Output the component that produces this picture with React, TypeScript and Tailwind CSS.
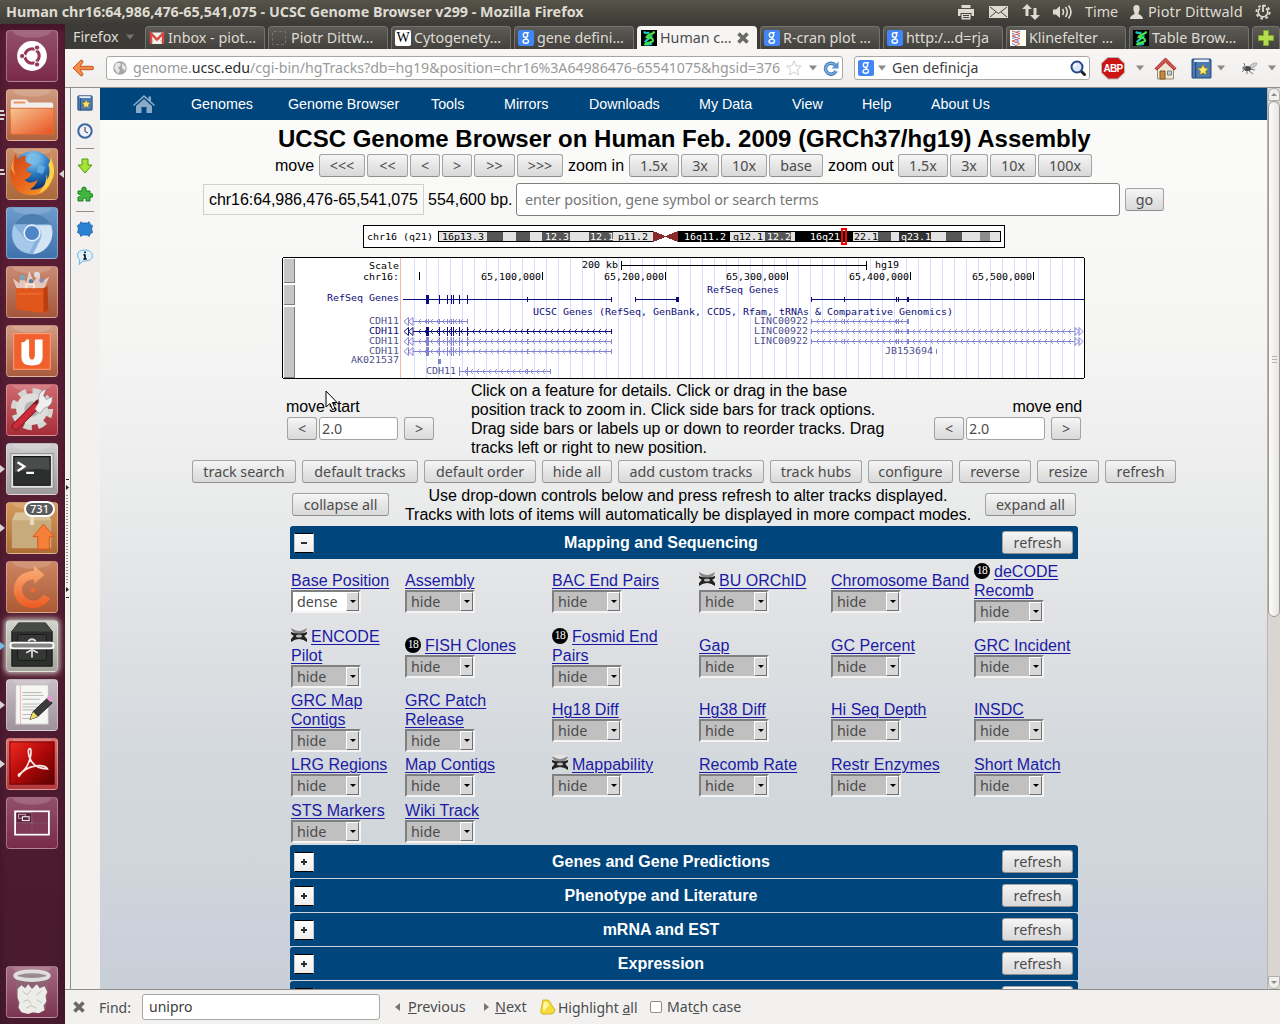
import React from "react";

type Kids = { children?: React.ReactNode };

const UI = "font-['Noto_Sans',sans-serif] text-[14.3px] text-[#4c4c4c]";

/* ---------- shared controls ---------- */

function Btn({ w, children, className = "" }: Kids & { w: string; className?: string }) {
  return (
    <button
      className={`${UI} ${w} ${className} h-[23px] shrink-0 rounded-[3px] border border-[#a3a3a3] border-b-[#8f8f8f] bg-linear-to-b from-[#f6f6f6] via-[#e6e6e6] to-[#d9d9d9] text-center leading-[21px] whitespace-nowrap`}
    >
      {children}
    </button>
  );
}

function Caret({ className = "" }: { className?: string }) {
  return (
    <svg className={`h-[6px] w-[8px] shrink-0 ${className}`} viewBox="0 0 8 6">
      <path d="M0 .5h8L4 5.500z" fill="#8a8a86" />
    </svg>
  );
}

/* ---------- small icons ---------- */

function GoogleIcon() {
  return (
    <span className="flex h-4 w-4 shrink-0 items-center justify-center rounded-[2px] bg-[#4285f4]">
      <svg className="h-4 w-4" viewBox="0 0 16 16" fill="none" stroke="#fff" strokeWidth="1.400">
        <ellipse cx="7.500" cy="5" rx="2.200" ry="2.400" />
        <path d="M8 2.600h3M8.500 7.300c-2 1.200 2 1.700 2 3.700 0 3-5.500 2.800-5.500.2 0-1.800 2-2 3.500-1.800" />
      </svg>
    </span>
  );
}

function DnaIcon() {
  return (
    <svg className="h-4 w-4 shrink-0" viewBox="0 0 16 16">
      <rect width="16" height="16" fill="#000" />
      <path d="M3 1.500C4 4 5.500 3 8.500 2.500M11 5.500C10.500 8 5.500 8.500 4 12.500M4 13.500q3 2 7 0" stroke="#17c6c0" strokeWidth="2.200" fill="none" />
      <path d="M13.500 1.500C12 5 5 4.500 5.500 8M6 8c3-1 6 0 6 2.500S6 11.500 3.500 15" stroke="#4be04a" strokeWidth="2.200" fill="none" />
    </svg>
  );
}

function GmailIcon() {
  return (
    <svg className="h-4 w-4 shrink-0" viewBox="0 0 16 16">
      <rect x="1" y="2.500" width="14" height="11.500" fill="#f1f1f1" />
      <path d="M1 14l5-5M15 14l-5-5" stroke="#c8c8c8" />
      <path d="M2 14V3.500l6 6 6-6V14" stroke="#d8483b" strokeWidth="2.400" fill="none" />
    </svg>
  );
}

function WikiIcon() {
  return (
    <span className="flex h-4 w-4 shrink-0 items-center justify-center rounded-[2px] bg-white font-['Liberation_Serif',serif] text-[14px] text-black">
      W
    </span>
  );
}

function HelixIcon() {
  return (
    <svg className="h-4 w-4 shrink-0" viewBox="0 0 16 16">
      <rect width="16" height="16" fill="#fffdf0" />
      <path d="M2 1l8 2.500L2 6l8 2.500L2 11l8 2.500L5 16" stroke="#d86060" fill="none" />
      <path d="M10 1L2 3.500 10 6 2 8.500 10 11l-8 2.500L7 16" stroke="#6c78d8" fill="none" strokeDasharray="4 3" />
    </svg>
  );
}

function BlankIcon() {
  return <span className="h-[14px] w-[14px] shrink-0 rounded-[2px] border border-dashed border-[#77756f]" />;
}

function CrossIcon({ className = "", color = "#6a6a66" }: { className?: string; color?: string }) {
  return (
    <svg className={`h-3 w-3 shrink-0 ${className}`} viewBox="0 0 12 12">
      <path d="M1.500 1.500l9 9M10.500 1.500l-9 9" stroke={color} strokeWidth="3.600" />
    </svg>
  );
}

function BookmarkBook({ size }: { size: string }) {
  return (
    <svg className={`${size} shrink-0`} viewBox="0 0 20 20">
      <rect x="1" y="1" width="18" height="18" rx="1" fill="#4a7ab4" stroke="#24456f" />
      <path d="M4.500 1v18" stroke="#24456f" />
      <path d="M3 1.500h14v2.300H3z" fill="#e9eef4" />
      <path d="M11.500 6l1.600 3.500 3.700.4-2.800 2.500.8 3.800-3.300-1.900-3.300 1.900.8-3.800L6.200 9.900l3.700-.4z" fill="#ffe96a" stroke="#8a7a14" strokeWidth=".7" />
    </svg>
  );
}

/* ---------- top panel ---------- */

function TopPanel() {
  return (
    <header className="flex h-6 shrink-0 items-center bg-linear-to-b from-[#575549] to-[#3c3b37] pr-2 pl-1.5 font-['Noto_Sans',sans-serif] text-[#dfdbd2]">
      <div className="w-[959px] text-[14.300px] leading-6 font-bold whitespace-nowrap">
        Human chr16:64,986,476-65,541,075 - UCSC Genome Browser v299 - Mozilla Firefox
      </div>
      <svg className="-ml-[7px] h-4 w-4" viewBox="0 0 16 16" fill="#dfdbd2">
        <path d="M3.500 1h9v3h-9zM0 5h16v7h-2.500V9h-11v3H0zM3.500 10h9v5.500h-9z" />
        <path d="M5 11.500h6M5 13.500h6" stroke="#444" />
      </svg>
      <svg className="ml-[15px] h-3 w-[19px]" viewBox="0 0 19 12">
        <rect width="19" height="12" fill="#dfdbd2" />
        <path d="M1 1l8.500 6.500L18 1M1 11l6-5M18 11l-6-5" stroke="#46443f" fill="none" />
      </svg>
      <svg className="ml-[14px] h-4 w-[18px]" viewBox="0 0 18 16" fill="#dfdbd2">
        <path d="M5 0l5 5H6.500v7h-3V5H0zM13 16l-5-5h3.500V4h3v7H18z" />
      </svg>
      <svg className="ml-[12px] h-4 w-[21px]" viewBox="0 0 21 16" fill="none" stroke="#dfdbd2" strokeWidth="1.600">
        <path d="M1 5.500h3l4-3.500v12l-4-3.500H1z" fill="#dfdbd2" stroke="none" />
        <path d="M10.500 5q2 3 0 6M13.500 3q3.500 5 0 10M16.500 1.500q5 6.500 0 13" />
      </svg>
      <span className="ml-[12px] w-[45px] text-[14.300px]">Time</span>
      <svg className="h-[14px] w-[13px]" viewBox="0 0 13 14" fill="#dfdbd2">
        <path d="M6.500 0C9 0 10 2 9.600 4.500 9.300 6.500 8.500 7 8.500 8.500c0 1.500 4.500 1.500 4.500 5.500H0c0-4 4.500-4 4.500-5.500C4.500 7 3.700 6.500 3.400 4.500 3 2 4 0 6.500 0z" />
      </svg>
      <span className="ml-[5px] w-[107px] pb-[2px] text-[14.500px] leading-[22px] tracking-[0.1px] whitespace-nowrap">Piotr Dittwald</span>
      <svg className="h-4 w-4 shrink-0" viewBox="0 0 16 16" fill="none" stroke="#dfdbd2">
        <circle cx="8" cy="8" r="6.600" strokeWidth="2" strokeDasharray="2.600 2.580" />
        <path d="M5 4.300a4.800 4.800 0 1 0 6 0" strokeWidth="1.600" />
        <path d="M8 1v7" strokeWidth="1.800" />
      </svg>
    </header>
  );
}

/* ---------- launcher ---------- */

function Tile({
  bg,
  children,
  left,
  right,
  className = "",
}: Kids & { bg: string; left?: "one" | "two" | "many" | "blue"; right?: boolean; className?: string }) {
  return (
    <div className={`relative h-[52px] w-[52px] shrink-0 rounded-[4px] border border-white/30 bg-linear-to-b ${bg} ${className}`}>
      <svg className="h-[50px] w-[50px]" viewBox="0 0 52 52">
        <ellipse cx="26" cy="0" rx="20" ry="7" fill="#fff" opacity=".15" />
        {children}
      </svg>
      {left === "one" && <i className="absolute top-[21px] -left-[7px] border-y-[4px] border-l-[5px] border-y-transparent border-l-[#d8d4d6]" />}
      {left === "blue" && <i className="absolute top-[21px] -left-[7px] border-y-[4px] border-l-[5px] border-y-transparent border-l-[#6fc3e8]" />}
      {(left === "many" || left === "two") && (
        <i className="absolute top-[20px] -left-[7px] flex flex-col gap-[2px]">
          <b className="h-[2px] w-[4px] bg-[#d8d4d6]" />
          <b className="h-[2px] w-[5px] bg-[#d8d4d6]" />
          {left === "many" && <b className="h-[2px] w-[4px] bg-[#d8d4d6]" />}
        </i>
      )}
      {right && <i className="absolute top-[21px] -right-[7px] border-y-[4px] border-r-[5px] border-y-transparent border-r-[#d8d4d6]" />}
    </div>
  );
}

function Launcher() {
  return (
    <aside className="flex w-[65px] shrink-0 flex-col gap-[7px] bg-linear-to-b from-[#5a1d34] via-[#561d33] to-[#471a2b] py-1.5 pl-1.5 shadow-[inset_0_6px_6px_rgba(0,0,0,0.25)]">
      <Tile bg="from-[#93506a] to-[#7b2a49]">
        <circle cx="26" cy="26" r="15.500" fill="#fff" />
        <circle cx="26" cy="26" r="7.500" fill="none" stroke="#93395a" strokeWidth="3.200" />
        <path d="M26 26L15 26M26 26l5.500-9.500M26 26l5.500 9.500" stroke="#fff" strokeWidth="1.400" />
        <g fill="#93395a" stroke="#fff" strokeWidth="1">
          <circle cx="15.800" cy="26" r="2.700" />
          <circle cx="31.200" cy="17.200" r="2.700" />
          <circle cx="31.200" cy="34.800" r="2.700" />
        </g>
      </Tile>
      <Tile bg="from-[#d09a80] to-[#b0613d]" left="many">
        <path d="M4 12q0-2 2-2h14l3 3h23q2 0 2 2v8H4z" fill="#f1eeec" />
        <path d="M7 12h12v2H7z" fill="#f09060" />
        <defs>
          <linearGradient id="fold" x2="1" y2="1">
            <stop stopColor="#f5c795" />
            <stop offset="1" stopColor="#e9501e" />
          </linearGradient>
        </defs>
        <path d="M3 19h46l-1 27H4z" fill="url(#fold)" stroke="#e06a30" />
      </Tile>
      <Tile bg="from-[#cd9067] to-[#a9683c]" left="two" right>
        <defs>
          <radialGradient id="globe" cx=".5" cy=".2" r=".8">
            <stop stopColor="#9fd8f8" />
            <stop offset=".5" stopColor="#2a7cc4" />
            <stop offset="1" stopColor="#0a2e6e" />
          </radialGradient>
          <linearGradient id="fox" x2="1" y2="1">
            <stop stopColor="#c9451a" />
            <stop offset=".5" stopColor="#ea661c" />
            <stop offset="1" stopColor="#f7a52c" />
          </linearGradient>
        </defs>
        <circle cx="27" cy="22" r="20" fill="url(#globe)" />
        <path d="M24 8q6-3 10 2l-4 5-6-2zM33 16l7 3-3 7-6-2z" fill="#6ab5e6" opacity=".8" />
        <path d="M47 15q4 9 0 18-6 15-21 15Q9 48 4 33 1 20 9 5l2 6q4-4 9-4-2 4 0 7 4 1 6 3-6 2-6 5 1 3 6 3-3 6-8 7 6 6 14 0-3 8-9 10 13 3 19-9 5-9 5-18z" fill="url(#fox)" />
        <path d="M46 6q0 5 2 10 3 10-3 19-4 8-12 11 9-10 8-20 1 3 1 6 4-8 1-16 3-4 3-10z" fill="#fbd24a" />
        <path d="M8 8q-3 10 1 20-5-7-5-8Q5 13 8 8z" fill="#f79a3c" />
      </Tile>
      <Tile bg="from-[#6d9ccb] to-[#3f72ad]">
        <circle cx="26" cy="27" r="21" fill="#86b3de" />
        <path d="M8 17Q14 6 26 6q13 0 19 11H26z" fill="#4a7fb0" />
        <path d="M46 18q4 12-4 22-6 7-15 8l8-16q3-7-4-14z" fill="#d3e4f5" />
        <path d="M7 18l10 12q5 8 12 5l-6 12Q9 45 6 32q-1-8 1-14z" fill="#a6c8ea" />
        <circle cx="26" cy="26" r="9" fill="#e8f1fa" />
        <circle cx="26" cy="26" r="7.300" fill="#4f86c6" />
      </Tile>
      <Tile bg="from-[#c98a72] to-[#a5563a]">
        <path d="M10 22L6 12l7 5 1-9 6 8 3-12 5 11 6-9 1 10 9-6-5 12z" fill="#f7e9e2" opacity=".7" />
        <circle cx="16" cy="11" r="3" fill="#7aa5b8" />
        <circle cx="31" cy="8" r="3" fill="#ddd" />
        <circle cx="36" cy="14" r="2.500" fill="#8d8db4" />
        <circle cx="25" cy="15" r="2.500" fill="#657b9a" />
        <path d="M9 22h29l4-2 1 25-4 3-29-4z" fill="#e0561b" />
        <path d="M38 22v26l5-3-1-25z" fill="#b93f0e" />
        <path d="M20 22v-4h8v4" fill="none" stroke="#ffe4d2" strokeWidth="2" />
        <path d="M11 28h26" stroke="#ef7a42" />
      </Tile>
      <Tile bg="from-[#d49a80] to-[#a95c3d]">
        <rect x="7" y="8" width="38" height="37" fill="#f2612d" stroke="#ffa27a" />
        <path d="M15 17q4 0 5-3h3v16q0 5 3 5t3-5V14h8v19q0 8-11 8T15 33z" fill="#fff" />
      </Tile>
      <Tile bg="from-[#cf6a70] to-[#a52c38]">
        <circle cx="26" cy="25" r="18" fill="none" stroke="#d4d4d2" strokeWidth="8" strokeDasharray="8 6.140" />
        <circle cx="26" cy="25" r="16.500" fill="#dededc" />
        <circle cx="26" cy="25" r="8" fill="#b4b4b2" />
        <path d="M9 43l24-24" stroke="#7c1a22" strokeWidth="8" strokeLinecap="round" />
        <path d="M9 43l20-20" stroke="#cf2a38" strokeWidth="6" strokeLinecap="round" />
        <path d="M29 25l4-7q-2-11 8-14l-3 7 3 4 6-3q1 10-8 12l-5 6z" fill="#eee" stroke="#888" strokeWidth=".7" />
      </Tile>
      <Tile bg="from-[#cfcdce] to-[#9e9a9c]" left="one">
        <rect x="4" y="10" width="44" height="36" fill="#e4e4e4" stroke="#8c8c8c" />
        <rect x="7" y="13" width="38" height="30" fill="#2d2f2e" stroke="#111" />
        <path d="M8 14h36v13Q26 24 8 30z" fill="#4a4c4b" />
        <path d="M11 19l7 4.500-7 4.500M20 30h8" stroke="#fff" strokeWidth="2.400" fill="none" />
      </Tile>
      <div className="relative">
        <Tile bg="from-[#d69a5e] to-[#ac6c33]" left="one">
          <path d="M5 18l4-8h33l4 8v29H5z" fill="#c8ab7c" />
          <path d="M5 18l4-8h33l4 8z" fill="#d9c198" />
          <path d="M24 10h4v13h-4z" fill="#e8dabe" />
          <path d="M38 22l11 13h-5v13H32V35h-5z" fill="#f58138" stroke="#d9521b" />
        </Tile>
        <span className="absolute -top-[1px] left-[18px] flex h-4 w-[31px] items-center justify-center rounded-full border-2 border-white bg-[#5b5b5b] font-['Noto_Sans',sans-serif] text-[11px] font-medium text-white">
          731
        </span>
      </div>
      <Tile bg="from-[#cc8562] to-[#ac5a33]">
        <defs>
          <linearGradient id="swirl" x2="0" y2="1">
            <stop stopColor="#f9b27a" />
            <stop offset="1" stopColor="#ee5a22" />
          </linearGradient>
        </defs>
        <path d="M45 38Q38 48 27 48 8 46 7 29 8 11 28 9V4l11 9.500L28 23v-5Q16 19 15.500 29 17 39 27 40q7 0 11-6z" fill="url(#swirl)" />
        <circle cx="27" cy="29" r="2.500" fill="#ef6a30" />
      </Tile>
      <Tile bg="from-[#d3d3cd] to-[#a5a59d]" left="blue" className="shadow-[0_0_5px_2px_rgba(230,230,220,0.7)]">
        <path d="M5 11l7-9h28l7 9v36H5z" fill="#2e302e" stroke="#151515" />
        <path d="M5 11l7-9h28l7 9z" fill="#484a47" />
        <rect x="11" y="14" width="30" height="27" rx="2" fill="#363836" stroke="#191919" />
        <path d="M22 21q4-4 8 0M26 30v8M26 30l-6 3M26 30l6 3" stroke="#ddd" strokeWidth="1.800" fill="none" />
        <rect x="3.500" y="22.500" width="45" height="6" rx="3" fill="#858585" stroke="#fff" strokeWidth="2" />
      </Tile>
      <Tile bg="from-[#c9bfc6] to-[#a0929b]" left="one">
        <rect x="9" y="5" width="34" height="41" fill="#f6f6f4" stroke="#bbb" />
        <path d="M14 5v41" stroke="#f0b0b0" />
        <path d="M16 13h20M16 16h22M16 20h18M16 25h20M16 28h18M16 31h12M16 36h10M16 40h8" stroke="#b4b4b4" />
        <path d="M24 41l3-8 15-14 5 5-15 14z" fill="#3b3b3b" stroke="#222" />
        <path d="M24 41l3-8 5 5z" fill="#f0dc6a" />
        <path d="M41 19l3-3q3 0 4 4l-3 3z" fill="#e79ad0" />
      </Tile>
      <Tile bg="from-[#dc6c68] to-[#b23a3e]" left="one">
        <defs>
          <linearGradient id="pdf" x2="1" y2="1">
            <stop stopColor="#f02a22" />
            <stop offset=".5" stopColor="#b00808" />
            <stop offset="1" stopColor="#5a0202" />
          </linearGradient>
        </defs>
        <rect x="3" y="3" width="46" height="44" fill="url(#pdf)" stroke="#6a0000" />
        <path d="M12 37q9-5 12-17 2-9 0-10-3 0-1 8 4 13 19 13-2-4-12-3Q18 30 13 38q-1 2-1-1z" fill="none" stroke="#fbe9e6" strokeWidth="1.800" />
      </Tile>
      <Tile bg="from-[#92506a] to-[#792b48]">
        <rect x="8.500" y="14" width="35" height="24" fill="#5e2440" stroke="#fff" strokeWidth="2" />
        <path d="M26 15v22M9.500 26h33" stroke="#a37a8c" strokeWidth="1" />
        <path d="M26.500 15h16v10.500h-16zM9.500 26.500h16V37h-16zM26.500 26.500h16V37h-16z" fill="#803a57" />
        <rect x="12" y="17" width="7" height="4" fill="none" stroke="#bda4ae" />
        <rect x="16" y="19.500" width="7" height="4" fill="#5e2440" stroke="#fff" />
      </Tile>
      <div className="grow" />
      <Tile bg="from-[#a26a80] to-[#7b3450]">
        <path d="M8 9l4 36q14 5 28 0l4-36z" fill="#8d6574" opacity=".8" />
        <ellipse cx="26" cy="9" rx="17.500" ry="4.500" fill="#9a8a90" stroke="#dededc" strokeWidth="4" />
        <path d="M11 23l4-4 4 3 3-4 4 5 5-5 3 4 5-2 3 6-2 4 1 6-3 4 1 5-6 3-6-1-5 2-7-2-3-5 1-5-2-5z" fill="#ecece9" />
        <path d="M16 25l5 4 4-5M31 29l5-4M17 36l5-2 3 4M31 34l5 3M20 43l5-3 6 3" stroke="#bcbcb8" fill="none" />
      </Tile>
    </aside>
  );
}

/* ---------- browser chrome ---------- */

const tabs: { icon: React.ReactNode; label: string; active?: boolean }[] = [
  { icon: <GmailIcon />, label: "Inbox - piot…" },
  { icon: <BlankIcon />, label: "Piotr Dittw…" },
  { icon: <WikiIcon />, label: "Cytogenety…" },
  { icon: <GoogleIcon />, label: "gene defini…" },
  { icon: <DnaIcon />, label: "Human c…", active: true },
  { icon: <GoogleIcon />, label: "R-cran plot …" },
  { icon: <GoogleIcon />, label: "http:/…d=rja" },
  { icon: <HelixIcon />, label: "Klinefelter …" },
  { icon: <DnaIcon />, label: "Table Brow…" },
];

function TabBar() {
  return (
    <div className="flex h-[25px] shrink-0 items-end gap-[3px] bg-[#3c3b37] font-['Noto_Sans',sans-serif] text-[14.300px]">
      <div className="flex h-full w-[77px] shrink-0 items-center pl-2 text-[#dfdbd2]">
        <span className="w-[53px] text-[14.300px]">Firefox</span>
        <svg className="h-[6px] w-[8px]" viewBox="0 0 8 6">
          <path d="M0 .5h8L4 5.500z" fill="#77756f" />
        </svg>
      </div>
      {tabs.map((t) => (
        <div
          key={t.label}
          className={
            t.active
              ? "flex h-[23px] w-[120px] shrink-0 items-center rounded-t-[4px] bg-[#f6f5f4] pl-[4px] leading-[20px] whitespace-nowrap text-[#4c4c4c]"
              : "flex h-[23px] w-[120px] shrink-0 items-center rounded-t-[4px] border border-b-0 border-[#74726c] bg-linear-to-b from-[#5d5b56] to-[#42413d] pl-[3px] leading-[20px] whitespace-nowrap text-[#dfdbd2]"
          }
        >
          <span className="flex w-[19px] shrink-0">{t.icon}</span>
          <span className={t.active ? "w-[77px] shrink-0" : ""}>{t.label}</span>
          {t.active && <CrossIcon />}
        </div>
      ))}
      <div className="flex h-[23px] w-[28px] shrink-0 items-center justify-center rounded-t-[4px] border border-b-0 border-[#74726c] bg-linear-to-b from-[#5d5b56] to-[#42413d]">
        <svg className="h-4 w-4" viewBox="0 0 16 16">
          <path d="M5.500.5h5v5h5v5h-5v5h-5v-5h-5v-5h5z" fill="#b5dc4e" stroke="#7fa423" />
        </svg>
      </div>
    </div>
  );
}

function NavToolbar() {
  return (
    <div className={`${UI} flex h-[39px] shrink-0 items-center border-b border-[#8f8e8b] bg-linear-to-b from-[#f7f6f5] to-[#efeeed] pl-[7px]`}>
      <svg className="h-[18px] w-[22px] shrink-0" viewBox="0 0 22 18">
        <path d="M1 9l8-8q2 0 2 2L8 7.300h12q1.500 0 1.500 1.700t-1.500 1.700H8l3 4.300q0 2-2 2z" fill="#f58a4b" stroke="#c65a1e" strokeLinejoin="round" />
      </svg>
      <div className="ml-[12px] flex h-6 w-[737px] shrink-0 items-center rounded-[3px] border border-[#a9a7a3] bg-white pl-[6px]">
        <svg className="h-[14px] w-[14px] shrink-0" viewBox="0 0 14 14">
          <circle cx="7" cy="7" r="6.800" fill="#a5a5a5" />
          <path d="M3 2l4 0 1 2-3 3 2 2-2 4-2-3-2-3zM9 2l4 4-1 4-3-3 0-2z" fill="#e6e6e6" />
        </svg>
        <div className="ml-[6px] w-[653px] shrink-0 text-[14.200px] tracking-[-0.045px] whitespace-nowrap text-[#9a9a9a]">
          genome.<span className="text-[#2c2c2c]">ucsc.edu</span>/cgi-bin/hgTracks?db=hg19&amp;position=chr16%3A64986476-65541075&amp;hgsid=376
        </div>
        <svg className="h-4 w-4 shrink-0" viewBox="0 0 16 16">
          <path d="M8 .8l2.100 5 5.200.3-4 3.500 1.400 5.300L8 12l-4.700 2.900 1.400-5.300-4-3.500 5.200-.3z" fill="#fff" stroke="#cfcfcf" />
        </svg>
        <Caret className="ml-[7px]" />
        <svg className="ml-[6px] h-[15px] w-4 shrink-0" viewBox="0 0 16 15">
          <path d="M12.500 4.500A5.500 5.500 0 1 0 13 10" fill="none" stroke="#3c78b8" strokeWidth="3.400" />
          <path d="M12.500 4.500A5.500 5.500 0 1 0 13 10" fill="none" stroke="#7fb2e2" strokeWidth="1.600" />
          <path d="M15.500.5v7h-7z" fill="#5a95cf" />
        </svg>
      </div>
      <div className="ml-[11px] flex h-6 w-[236px] shrink-0 items-center rounded-[3px] border border-[#a9a7a3] bg-white pl-[3px]">
        <GoogleIcon />
        <Caret className="ml-[4px]" />
        <span className="ml-[6px] w-[178px] text-[14.100px] text-[#3c3c3c]">Gen definicja</span>
        <svg className="h-4 w-4 shrink-0" viewBox="0 0 16 16">
          <path d="M10.500 10.500l4 4" stroke="#222" strokeWidth="3" strokeLinecap="round" />
          <circle cx="7" cy="7" r="5.500" fill="#dbe8f8" stroke="#27458a" strokeWidth="2" />
          <path d="M4 7a3 3 0 0 1 3-3" stroke="#fff" strokeWidth="1.500" fill="none" />
        </svg>
      </div>
      <span className="ml-[11px] flex h-[23px] w-[24px] shrink-0 items-center justify-center bg-[#b9b9b9] [clip-path:polygon(29%_0,71%_0,100%_29%,100%_71%,71%_100%,29%_100%,0_71%,0_29%)]">
        <span className="flex h-[21px] w-[22px] items-center justify-center bg-[#cc1414] font-['Liberation_Sans_Narrow','Liberation_Sans',sans-serif] text-[10px] font-bold tracking-[-0.7px] text-white [clip-path:polygon(29%_0,71%_0,100%_29%,100%_71%,71%_100%,29%_100%,0_71%,0_29%)]">
          ABP
        </span>
      </span>
      <Caret className="ml-[11px]" />
      <svg className="ml-[10px] h-[23px] w-[23px] shrink-0" viewBox="0 0 23 23">
        <path d="M3.500 11v11h16V11l-8-7z" fill="#efe6d6" stroke="#9c8a74" />
        <path d="M11.500 1L1 11.500l2 1.500 8.500-8 8.500 8 2-1.500z" fill="#d9534a" stroke="#98302a" />
        <path d="M6 14h5v8H6z" fill="#c68a3a" stroke="#7a5420" />
        <path d="M13.500 14h4v4h-4z" fill="#b9d0e6" stroke="#7c7c7c" />
      </svg>
      <span className="ml-[14px] flex">
        <BookmarkBook size="h-[21px] w-[21px]" />
      </span>
      <Caret className="ml-[5px]" />
      <svg className="ml-[16px] h-4 w-[17px] shrink-0" viewBox="0 0 17 16">
        <path d="M7 8Q11 2 16 3q0 4-7 6z" fill="#c9c9c9" stroke="#999" strokeWidth=".6" />
        <ellipse cx="6.500" cy="8.500" rx="3.600" ry="2.600" fill="#4b4b4b" />
        <circle cx="3" cy="8" r="1.700" fill="#777" />
        <path d="M3 10l-2 2M6 11l0 3M8 11l4 3M9 9l5 1M4 6l-1-3" stroke="#555" strokeWidth=".8" />
      </svg>
      <Caret className="ml-[10px]" />
    </div>
  );
}

function SideIcons() {
  return (
    <>
      <div className="flex w-[6px] shrink-0 flex-col items-center border-r border-[#8f8e8b] bg-[#f2f1f0] pt-[391px]">
        <svg className="h-[122px] w-[5px]" viewBox="0 0 5 122">
          <path d="M1 .5h3M1 118.500h3" stroke="#222" />
          <path d="M1 6l3 2.500L1 11zM1 108l3 2.500-3 2.500z" fill="#222" />
          <path d="M2 16v88" stroke="#333" strokeDasharray="1 2" />
        </svg>
      </div>
      <div className="flex w-[29px] shrink-0 flex-col items-center bg-[#f2f1f0] pt-[7px] pr-px">
        <BookmarkBook size="h-4 w-4" />
        <svg className="mt-[12px] h-4 w-4" viewBox="0 0 16 16">
          <circle cx="8" cy="8" r="6.700" fill="#eef2f8" stroke="#3d659e" strokeWidth="2" />
          <path d="M8 4v4.500l3 1.500" stroke="#333" fill="none" />
        </svg>
        <div className="mt-[9px] h-px w-[18px] bg-[#8f8e8b]" />
        <svg className="mt-[9px] h-4 w-4" viewBox="0 0 16 16">
          <path d="M5 1h6v6h4l-7 8-7-8h4z" fill="#a5e335" stroke="#4c9a0a" />
        </svg>
        <svg className="mt-[12px] h-4 w-4" viewBox="0 0 16 16">
          <path d="M1 5h4q-1-4 2-4t2 4h4v3q3-1 3 1.500T13 11v4H9q1-3-1.500-3T6 15H1v-4q3 0 3-1.500T1 8z" fill="#3fb93c" stroke="#1d7f1f" />
        </svg>
        <div className="mt-[9px] h-px w-[18px] bg-[#8f8e8b]" />
        <svg className="mt-[9px] h-4 w-4" viewBox="0 0 16 16">
          <path d="M4 .7l1.500 1.300h5L12 .7l1.500 3 2 1L14.500 8l1 3.500-2 1-1.500 3L10.500 14h-5L4 15.500l-1.500-3-2-1L1.500 8l-1-3.500 2-1z" fill="#2c82d2" stroke="#1a5ea5" strokeWidth=".8" />
        </svg>
        <svg className="mt-[12px] h-4 w-4" viewBox="0 0 16 16">
          <path d="M8 1c4.500 0 7.500 2.400 7.500 5.700S12.500 12 8 12q-1 0-2 0l-4 3.500.8-5Q.5 9 .5 6.700.5 1 8 1z" fill="#dff0fc" stroke="#6bb2e3" />
          <path d="M8 2.500v1.800M8 5.500v4.500M6.500 5.800h1.500M6.300 10h3.500" stroke="#111" strokeWidth="1.700" />
        </svg>
      </div>
    </>
  );
}

function ScrollBar() {
  return (
    <div className="flex w-[13px] shrink-0 flex-col border-l border-[#b9b4ae] bg-[#d9d5d1]">
      <div className="flex h-[13px] items-center justify-center rounded-t-full border border-[#b4b0ab] bg-[#f0efee]">
        <i className="border-x-[3px] border-b-[3px] border-x-transparent border-b-[#8a8a86]" />
      </div>
      <div className="flex h-[516px] flex-col items-center justify-center gap-[2px] rounded-[6px] border border-[#9c9893] bg-linear-to-r from-[#fbfbfa] to-[#e8e6e4]">
        <i className="h-px w-[5px] bg-[#b4b0ab]" />
        <i className="h-px w-[5px] bg-[#b4b0ab]" />
        <i className="h-px w-[5px] bg-[#b4b0ab]" />
      </div>
      <div className="grow" />
      <div className="flex h-[13px] items-center justify-center rounded-b-full border border-[#b4b0ab] bg-[#f0efee]">
        <i className="border-x-[3px] border-t-[3px] border-x-transparent border-t-[#8a8a86]" />
      </div>
    </div>
  );
}

function FindBar() {
  return (
    <div className={`${UI} flex h-[35px] shrink-0 items-center border-t border-[#8f8e8b] bg-[#f2f1f0] pl-[8px] whitespace-nowrap`}>
      <CrossIcon />
      <span className="ml-[14px] w-[43px] shrink-0 text-[14px]">Find:</span>
      <div className="h-[26px] w-[238px] shrink-0 rounded-[3px] border border-[#a9a7a3] bg-white pl-[6px] text-[14px] leading-[24px] text-[#3c3c3c]">unipro</div>
      <i className="ml-[15px] border-y-[4px] border-r-[5px] border-y-transparent border-r-[#77756f]" />
      <span className="ml-[8px] w-[76px] shrink-0 text-[14.400px]"><u>P</u>revious</span>
      <i className="border-y-[4px] border-l-[5px] border-y-transparent border-l-[#77756f]" />
      <span className="ml-[6px] w-[45px] shrink-0 text-[14.400px]"><u>N</u>ext</span>
      <svg className="h-4 w-4 shrink-0" viewBox="0 0 16 16">
        <path d="M3 1h5q2 1 3 4l4 6q-1 4-4 4H2q-2-1-1-4z" fill="#f7dc3d" stroke="#d3b31b" />
        <path d="M4 3q3-1 5 3l-5 6q-2-3 0-9z" fill="#fff6a8" />
      </svg>
      <span className="ml-[2px] w-[92px] shrink-0 text-[14px]">Highlight <u>a</u>ll</span>
      <span className="h-3 w-3 shrink-0 rounded-[2px] border border-[#8f8e8b] bg-white" />
      <span className="ml-[5px] text-[14.100px]">Mat<u>c</u>h case</span>
    </div>
  );
}

/* ---------- genome page ---------- */

const menu: [string, string][] = [
  ["Genomes", "w-[97px]"],
  ["Genome Browser", "w-[143px]"],
  ["Tools", "w-[73px]"],
  ["Mirrors", "w-[85px]"],
  ["Downloads", "w-[110px]"],
  ["My Data", "w-[93px]"],
  ["View", "w-[70px]"],
  ["Help", "w-[69px]"],
  ["About Us", "w-[80px]"],
];

const mono = "'DejaVu Sans Mono', monospace";

function Label({ x, y, t, c = "#000", end }: { x: number; y: number; t: string; c?: string; end?: boolean }) {
  const len = t.length * 6;
  return (
    <text x={end ? x - len : x} y={y} fontFamily={mono} fontSize="9" textLength={len} lengthAdjust="spacingAndGlyphs" fill={c} xmlSpace="preserve">
      {t}
    </text>
  );
}

const bands: [number, number, string][] = [
  [438, 487, "#e2e2e2"], [487, 503, "#555"], [503, 516, "#e2e2e2"], [516, 530, "#555"], [530, 542, "#e2e2e2"],
  [542, 570, "#555"], [570, 589, "#e2e2e2"], [589, 613, "#555"], [613, 653, "#e2e2e2"],
  [678, 730, "#000"], [730, 765, "#e2e2e2"], [765, 791, "#555"], [791, 795, "#e2e2e2"], [795, 853, "#000"],
  [853, 878, "#e2e2e2"], [878, 891, "#555"], [891, 899, "#e2e2e2"], [899, 931, "#333"], [931, 946, "#e2e2e2"],
  [946, 962, "#555"], [962, 980, "#e2e2e2"], [980, 990, "#8e8e8e"], [990, 1000, "#e2e2e2"],
];

function Ideogram() {
  return (
    <svg className="ml-[263px] h-[23px] w-[642px]" viewBox="363 225 642 23" shapeRendering="crispEdges">
      <rect x="363.500" y="225.500" width="641" height="22" rx="1" fill="#fff" stroke="#000" />
      {bands.map(([a, b, f]) => (
        <rect key={a} x={a} y="232" width={b - a} height="9" fill={f} />
      ))}
      <path d="M653 231.500H438.500v10H653M678 231.500h322.500v10H678" fill="none" stroke="#000" />
      <path d="M653 231l12.500 5L678 231v11l-12.500-5-12.500 5z" fill="#8b2a2a" />
      <Label x={367} y={240} t="chr16 (q21)" />
      <Label x={442} y={240} t="16p13.3" />
      <Label x={545} y={240} t="12.3" c="#fff" />
      <Label x={590} y={240} t="12.1" c="#fff" />
      <Label x={618} y={240} t="p11.2" />
      <Label x={684} y={240} t="16q11.2" c="#fff" />
      <Label x={733} y={240} t="q12.1" />
      <Label x={767} y={240} t="12.2" c="#fff" />
      <Label x={810} y={240} t="16q21" c="#fff" />
      <Label x={854} y={240} t="22.1" />
      <Label x={901} y={240} t="q23.1" c="#fff" />
      <rect x="842" y="229" width="4" height="15" fill="none" stroke="#f00" strokeWidth="2" />
    </svg>
  );
}

const DARK = "#0c0c78";
const LIGHT = "#8282d2";

function Gene({ y, a, b, c, exons = [], small = [], arrows = true }: { y: number; a: number; b: number; c: string; exons?: number[]; small?: number[]; arrows?: boolean }) {
  const marks: number[] = [];
  if (arrows) for (let x = a + 5; x < b - 3; x += 6) marks.push(x);
  return (
    <g fill="none" stroke={c}>
      <path d={`M${a} ${y}H${b}`} />
      <path d={marks.map((x) => `M${x + 1} ${y - 1}h1M${x + 1} ${y + 1}h1M${x + 2} ${y - 2}h1M${x + 2} ${y + 2}h1`).join("")} opacity=".8" />
      <path d={exons.map((x) => `M${x + 0.5} ${y - 4.5}v9`).join("")} />
      <path d={small.map((x) => `M${x + 0.5} ${y - 2.5}v5`).join("")} />
    </g>
  );
}

const cdhExons = [439, 447, 451, 453, 459, 467];

function TrackImage() {
  const grid = Array.from({ length: 56 }, (_, i) => 414 + i * 12);
  return (
    <svg className="mt-[9px] ml-[182px] h-[122px] w-[803px]" viewBox="282 257 803 122" shapeRendering="crispEdges">
      <rect x="282.500" y="257.500" width="802" height="121" rx="2" fill="#fff" stroke="#000" />
      {[[259, 24], [285, 20], [307, 71]].map(([y, h]) => (
        <g key={y}>
          <rect x="284" y={y} width="11" height={h} fill="#c6c6c6" />
          <path d={`M294.500 ${y}v${h}M284 ${y + h - 0.5}h11`} stroke="#7c7c7c" />
        </g>
      ))}
      <path d={grid.map((x) => `M${x + 0.5} 258v120`).join("")} stroke="#dcdcff" />
      <path d="M400.500 258v120" stroke="#f5b4b4" />

      <Label x={399} y={269} t="Scale" end />
      <Label x={399} y={280} t="chr16:" end />
      <Label x={618} y={268} t="200 kb" end />
      <Label x={875} y={268} t="hg19" />
      <path d="M621.500 265.500H866.500M621.500 261v9M866.500 261v9M419.500 272v8" stroke="#000" fill="none" />
      {[542, 665, 787, 910, 1033].map((x, i) => (
        <g key={x}>
          <Label x={x - 1} y={280} t={`65,${i + 1}00,000`} end />
          <path d={`M${x + 0.5} 272v8`} stroke="#000" />
        </g>
      ))}

      <Label x={707} y={293} t="RefSeq Genes" c={DARK} />
      <Label x={399} y={301} t="RefSeq Genes" c={DARK} end />
      <Gene y={299.5} a={403} b={612} c={DARK} exons={cdhExons} small={[527, 611]} arrows={false} />
      <rect x="426" y="295" width="3" height="9" fill={DARK} />
      <Gene y={299.5} a={635} b={679} c={DARK} small={[635, 676, 677, 678]} arrows={false} />
      <Gene y={299.5} a={811} b={1084} c={DARK} small={[811, 844, 896, 898, 907, 908]} arrows={false} />

      <Label x={533} y={315} t="UCSC Genes (RefSeq, GenBank, CCDS, Rfam, tRNAs & Comparative Genomics)" c={DARK} />

      {[321.5, 331.5, 341.5, 351.5].map((y, i) => {
        const c = i === 1 ? DARK : LIGHT;
        return (
          <g key={y}>
            <Label x={399} y={y + 2.5} t="CDH11" c={i === 1 ? DARK : "#50508c"} end />
            <Gene
              y={y}
              a={413}
              b={i === 0 ? 468 : 612}
              c={c}
              exons={i === 0 ? [] : i === 3 ? cdhExons.slice(0, 5) : cdhExons}
              small={i === 0 ? [426, 428, 439, 447, 451, 453, 459, 467] : [527, 611]}
            />
            {i > 0 && <rect x="426" y={y - 4.500} width="3" height="9" fill={c} />}
            <path d={`M408.500 ${y - 4}l-4.500 4 4.500 4zM413 ${y - 4}l-4.500 4 4.500 4z`} fill="none" stroke={c} shapeRendering="auto" />
          </g>
        );
      })}
      <Label x={399} y={363} t="AK021537" c="#50508c" end />
      <rect x="438" y="359" width="3" height="5" fill={LIGHT} />
      <Label x={426} y={374} t="CDH11" c="#50508c" />
      <Gene y={371.5} a={459} b={551} c={LIGHT} exons={[459, 467]} small={[527, 550]} />

      {[321.5, 331.5, 341.5].map((y, i) => (
        <g key={y}>
          <Label x={754} y={y + 2.5} t="LINC00922" c="#50508c" />
          <Gene y={y} a={811} b={i === 0 ? 909 : 1074} c={LIGHT} small={[811, ...(i === 1 ? [] : [844]), 896, 898, 907, 908]} />
          {i > 0 && <path d={`M1075 ${y - 4}l4 4-4 4zM1079 ${y - 4}l4 4-4 4z`} fill="none" stroke={LIGHT} shapeRendering="auto" />}
        </g>
      ))}
      <Label x={885} y={354} t="JB153694" c="#50508c" />
      <path d="M936.500 349v5" stroke={LIGHT} />
    </svg>
  );
}

function Pill18() {
  return (
    <span className="mt-px mr-[4px] flex h-4 w-4 shrink-0 items-center justify-center rounded-full bg-black font-['Liberation_Serif',serif] text-[11.500px] leading-none tracking-[-0.5px] text-white">
      18
    </span>
  );
}

function EncodeIcon() {
  return (
    <svg className="mr-[4px] h-4 w-4 shrink-0" viewBox="0 0 16 16">
      <path d="M0 0h16v5q-8 3-16 0z" fill="#e4e4e4" />
      <path d="M0 1q5 3 8 3t8-3l-1 3-4 3 3 2 2 5-5-2H5l-5 2 2-5 3-2-4-3z" fill="#8a8a8a" />
      <path d="M0 5q8 3 16 0v2l-3 2 3 3v3q-4-3-8-3t-8 3v-3l3-3-3-2z" fill="#222" />
      <ellipse cx="8" cy="9" rx="3" ry="1.500" fill="#b8b8b8" />
    </svg>
  );
}

type Track = { lines: string[]; icon?: "18" | "enc"; value?: string };

const rows: { h: string; items: Track[] }[] = [
  { h: "h-[60px] mt-[3px]", items: [{ lines: ["Base Position"], value: "dense" }, { lines: ["Assembly"] }, { lines: ["BAC End Pairs"] }, { lines: ["BU ORChID"], icon: "enc" }, { lines: ["Chromosome Band"] }, { lines: ["deCODE", "Recomb"], icon: "18" }] },
  { h: "h-[60px] mt-[5px]", items: [{ lines: ["ENCODE", "Pilot"], icon: "enc" }, { lines: ["FISH Clones"], icon: "18" }, { lines: ["Fosmid End", "Pairs"], icon: "18" }, { lines: ["Gap"] }, { lines: ["GC Percent"] }, { lines: ["GRC Incident"] }] },
  { h: "h-[60px] mt-[4px]", items: [{ lines: ["GRC Map", "Contigs"] }, { lines: ["GRC Patch", "Release"] }, { lines: ["Hg18 Diff"] }, { lines: ["Hg38 Diff"] }, { lines: ["Hi Seq Depth"] }, { lines: ["INSDC"] }] },
  { h: "h-[41px] mt-[4px]", items: [{ lines: ["LRG Regions"] }, { lines: ["Map Contigs"] }, { lines: ["Mappability"], icon: "enc" }, { lines: ["Recomb Rate"] }, { lines: ["Restr Enzymes"] }, { lines: ["Short Match"] }] },
  { h: "h-[41px] mt-[5px]", items: [{ lines: ["STS Markers"] }, { lines: ["Wiki Track"] }] },
];

function TrackCell({ t, short }: { t: Track; short: boolean }) {
  const on = t.value !== undefined;
  const lift = !short && t.lines.length === 1;
  return (
    <div className={`whitespace-nowrap ${lift ? "pb-px" : ""}`}>
      {t.lines.map((l, i) => (
        <div key={l} className="flex h-[19px] items-start leading-[19px] text-[#1a1aa6]">
          {i === 0 && t.icon === "18" && <Pill18 />}
          {i === 0 && t.icon === "enc" && <EncodeIcon />}
          <a className="tracking-[0.03px] underline decoration-1 underline-offset-2">{l}</a>
        </div>
      ))}
      <div
        className={`${UI} ${on ? "bg-white" : "bg-[#c0c0c0]"} flex h-[23px] w-[70px] items-stretch justify-between border-2 border-t-[#808080] border-r-[#f4f4f4] border-b-[#f4f4f4] border-l-[#808080] pl-[4px] leading-[19px]`}
      >
        <span>{t.value ?? "hide"}</span>
        <span className="flex w-[13px] items-center justify-center border border-t-white border-r-[#707070] border-b-[#707070] border-l-white bg-[#d8d8d8]">
          <i className="border-x-[3px] border-t-[3px] border-x-transparent border-t-black" />
        </span>
      </div>
    </div>
  );
}

function GroupHeader({ title, sign, className = "" }: { title?: string; sign: string; className?: string }) {
  return (
    <div className={`ml-[190px] flex h-[33px] w-[788px] shrink-0 items-center rounded-t-[3px] bg-[#00457c] pr-[5px] pl-[4px] ${className}`}>
      <span className="flex h-5 w-5 items-center justify-center border border-x-[#c9c9c9] border-y-black bg-linear-to-b from-white to-[#ededed]">
        <svg className="h-2 w-2" viewBox="0 0 8 8">
          <path d={sign === "+" ? "M1 4h6M4 1v6" : "M1 4h6"} stroke="#2e2e2e" strokeWidth="2" />
        </svg>
      </span>
      <span className="w-[688px] pl-[6px] text-center font-bold text-white">{title}</span>
      <Btn w="w-[71px]">{title ? "refresh" : null}</Btn>
    </div>
  );
}

function MoveBox({ label, right }: { label: string; right?: boolean }) {
  return (
    <div className="w-[148px] shrink-0 pt-[14px]">
      <div className={right ? "h-[22px] text-right tracking-[-0.1px]" : "-ml-px h-[22px] tracking-[-0.1px]"}>{label}</div>
      <div className="flex">
        <Btn w="w-[30px]">&lt;</Btn>
        <div className={`${UI} mr-[6px] ml-[2px] h-[23px] w-[79px] rounded-[3px] border border-[#a3a3a3] bg-white pl-[2px] leading-[21px]`}>2.0</div>
        <Btn w="w-[30px]">&gt;</Btn>
      </div>
    </div>
  );
}

function Page() {
  return (
    <main className="flex min-w-0 flex-1 flex-col overflow-hidden bg-[linear-gradient(180deg,#fbfbf9_0,#fafaf8_60px,#f5f5f4_250px,#ebecec_400px,#dfe1e4_540px,#d3d8dc_680px,#d0d6d9_770px,#cbd0db_850px,#c9cfd6_901px)] font-['Liberation_Sans',sans-serif] text-[16px] text-black">
      <nav className="flex h-8 shrink-0 items-center bg-[#00457c] pl-[33px] text-[14.300px] whitespace-nowrap text-white">
        <svg className="mr-[36px] h-[18px] w-[22px]" viewBox="0 0 22 18">
          <path d="M11 0l4.500 4V1.500h2.500V6.200L22 10l-1 1L11 2.300 1 11l-1-1z" fill="#8aa8c8" />
          <path d="M11 4l8 7v7h-5.500v-6h-5v6H3v-7z" fill="#8aa8c8" />
        </svg>
        {menu.map(([m, w]) => (
          <span key={m} className={`${w} shrink-0 pt-[2px]`}>{m}</span>
        ))}
      </nav>

      <h1 className="ml-[178px] h-[34px] shrink-0 text-[24px] leading-[38px] font-bold whitespace-nowrap">
        UCSC Genome Browser on Human Feb. 2009 (GRCh37/hg19) Assembly
      </h1>

      <div className="ml-[175px] flex h-[23px] shrink-0 items-center gap-[2px] whitespace-nowrap">
        <span className="w-[42px]">move</span>
        <Btn w="w-[46px]">&lt;&lt;&lt;</Btn>
        <Btn w="w-[41px]">&lt;&lt;</Btn>
        <Btn w="w-[30px]">&lt;</Btn>
        <Btn w="w-[30px]">&gt;</Btn>
        <Btn w="w-[41px]">&gt;&gt;</Btn>
        <Btn w="w-[46px]">&gt;&gt;&gt;</Btn>
        <span className="w-[62px] pl-[3px]">zoom in</span>
        <Btn w="w-[50px]">1.5x</Btn>
        <Btn w="w-[38px]">3x</Btn>
        <Btn w="w-[46px]">10x</Btn>
        <Btn w="w-[54px]">base</Btn>
        <span className="w-[71px] pl-[3px]">zoom out</span>
        <Btn w="w-[50px]">1.5x</Btn>
        <Btn w="w-[38px]">3x</Btn>
        <Btn w="w-[46px]">10x</Btn>
        <Btn w="w-[54px]">100x</Btn>
      </div>

      <div className="mt-[6px] ml-[103px] flex h-[33px] shrink-0 items-center whitespace-nowrap">
        <div className="h-[31px] w-[221px] border border-[#d0d0d0] pl-[5px] leading-[30px] tracking-[-0.04px]">chr16:64,986,476-65,541,075</div>
        <span className="w-[92px] pl-[4px]">554,600 bp.</span>
        <div className={`${UI} h-[33px] w-[604px] rounded-[3px] border border-[#7f7f7f] bg-white pl-[8px] leading-[32px] tracking-[-0.08px] text-[#757575]`}>
          enter position, gene symbol or search terms
        </div>
        <Btn w="w-[39px]" className="ml-[5px]">go</Btn>
      </div>

      <div className="mt-[9px] shrink-0">
        <Ideogram />
        <TrackImage />
      </div>

      <div className="ml-[187px] flex h-[81px] shrink-0 pt-[2px]">
        <MoveBox label="move start" />
        <p className="ml-[36px] w-[463px] text-[16px] leading-[19px] tracking-[-0.065px] whitespace-nowrap">
          Click on a feature for details. Click or drag in the base
          <br />
          position track to zoom in. Click side bars for track options.
          <br />
          Drag side bars or labels up or down to reorder tracks. Drag
          <br />
          tracks left or right to new position.
        </p>
        <MoveBox label="move end" right />
      </div>

      <div className="ml-[92px] flex shrink-0 gap-[6px]">
        <Btn w="w-[104px]">track search</Btn>
        <Btn w="w-[116px]">default tracks</Btn>
        <Btn w="w-[112px]">default order</Btn>
        <Btn w="w-[70px]">hide all</Btn>
        <Btn w="w-[146px]">add custom tracks</Btn>
        <Btn w="w-[92px]">track hubs</Btn>
        <Btn w="w-[85px]">configure</Btn>
        <Btn w="w-[72px]">reverse</Btn>
        <Btn w="w-[62px]">resize</Btn>
        <Btn w="w-[71px]">refresh</Btn>
      </div>

      <div className="ml-[192px] flex h-[43px] shrink-0 pt-[3px]">
        <Btn w="w-[97px]" className="mt-[7px]">collapse all</Btn>
        <p className="w-[596px] pl-[2px] text-center leading-[19px] tracking-[-0.03px] whitespace-nowrap">
          Use drop-down controls below and press refresh to alter tracks displayed.
          <br />
          Tracks with lots of items will automatically be displayed in more compact modes.
        </p>
        <Btn w="w-[91px]" className="mt-[7px]">expand all</Btn>
      </div>

      <GroupHeader title="Mapping and Sequencing" sign="-" />
      {rows.map((r, i) => (
        <div key={i} className={`${r.h} ml-[191px] grid shrink-0 grid-cols-[114px_147px_147px_132px_143px_110px] items-center`}>
          {r.items.map((t) => (
            <TrackCell key={t.lines[0]} t={t} short={i > 2} />
          ))}
        </div>
      ))}
      <GroupHeader title="Genes and Gene Predictions" sign="+" className="mt-[3px]" />
      <GroupHeader title="Phenotype and Literature" sign="+" className="mt-px" />
      <GroupHeader title="mRNA and EST" sign="+" className="mt-px" />
      <GroupHeader title="Expression" sign="+" className="mt-px" />
      <GroupHeader sign="+" className="mt-px" />
    </main>
  );
}

export default function App() {
  return (
    <div className="relative flex h-[1024px] w-[1280px] flex-col overflow-hidden bg-[#f2f1f0]">
      <TopPanel />
      <div className="flex min-h-0 flex-1">
        <Launcher />
        <div className="flex min-w-0 flex-1 flex-col">
          <TabBar />
          <NavToolbar />
          <div className="flex min-h-0 flex-1">
            <SideIcons />
            <Page />
            <ScrollBar />
          </div>
          <FindBar />
        </div>
      </div>
      <svg className="absolute top-[390px] left-[325px] h-[22px] w-[14px]" viewBox="0 0 14 22">
        <path d="M1 1v16l4-3.500 2.500 6 2.500-1-2.500-6H12z" fill="#fff" stroke="#000" />
      </svg>
    </div>
  );
}
